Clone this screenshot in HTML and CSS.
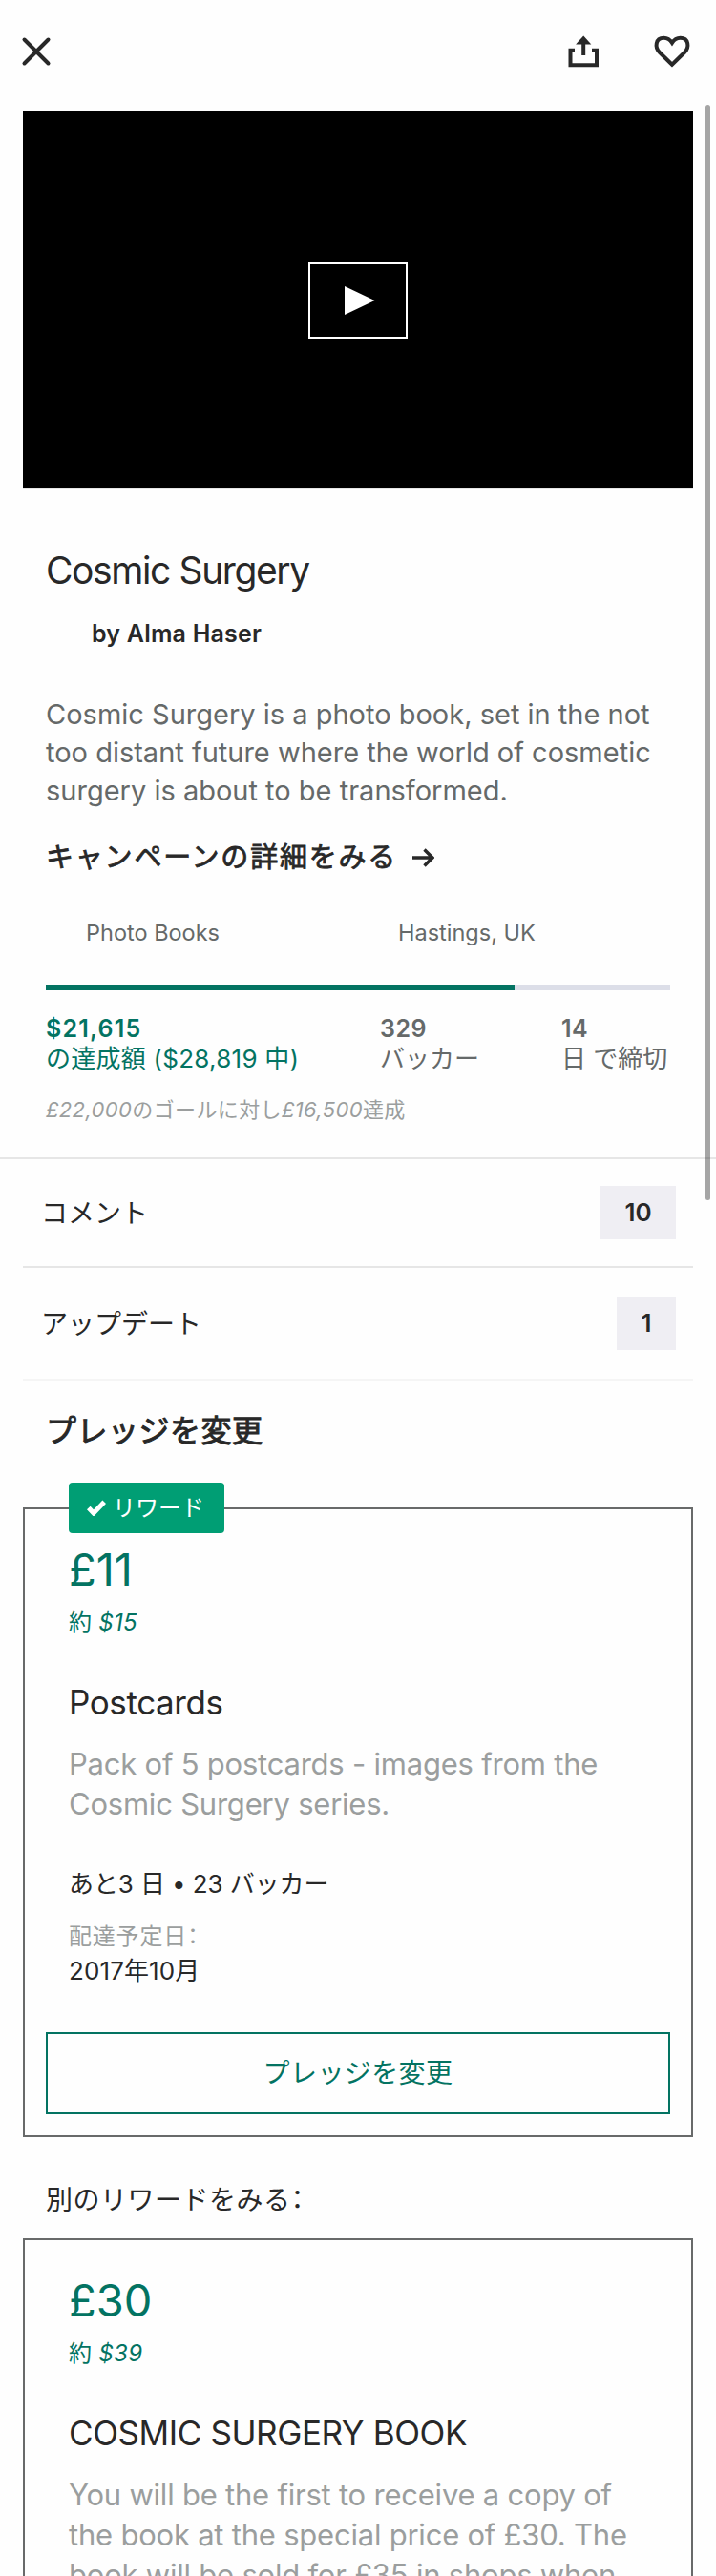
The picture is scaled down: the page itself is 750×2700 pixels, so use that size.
FILE: index.html
```html
<!DOCTYPE html>
<html lang="ja">
<head>
<meta charset="utf-8">
<title>Cosmic Surgery</title>
<link rel="stylesheet" href="styles.css">
</head>
<body>
<div class="page">
  <header class="toolbar">
    <svg class="icon-close" width="34" height="34" viewBox="0 0 34 34"><path d="M4.500 4.500 29.500 29.500M29.500 4.500 4.500 29.500"/></svg>
    <div class="actions">
      <svg class="icon-share" width="34" height="36" viewBox="0 0 34 36"><path class="line" d="M8 16.800H3.500V32.300h27.500V16.800h-5"/><path class="line" d="M17.200 8v14"/><path class="solid" d="M17.200 1.500 25.300 10.500H9.100z"/></svg>
      <svg class="icon-heart" width="40" height="36" viewBox="0 0 40 36"><path d="M20 31.800 7 19C1.500 13.500 2.500 3.800 11.300 3.800 15.500 3.800 18 5.800 20 8.900 22 5.800 24.500 3.800 28.700 3.800 37.500 3.800 38.500 13.500 33 19z"/></svg>
    </div>
  </header>

  <div class="video">
    <div class="play"><svg width="32" height="30" viewBox="0 0 32 30"><path d="M0 0 31.500 15 0 30z"/></svg></div>
  </div>

  <main>
    <section class="summary">
      <h1 class="project-title">Cosmic Surgery</h1>
      <p class="creator">by Alma Haser</p>
      <p class="blurb">Cosmic Surgery is a photo book, set in the not<br>too distant future where the world of cosmetic<br>surgery is about to be transformed.</p>
      <a class="campaign-link">キャンペーンの詳細をみる<svg width="24" height="24" viewBox="0 0 24 24"><path d="M1 12H21.500M13.500 3.500 22 12 13.500 20.500"/></svg></a>
      <div class="facts"><span class="category">Photo Books</span><span class="place">Hastings, UK</span></div>
      <div class="progress"><div class="progress-fill"></div></div>
      <div class="stats">
        <div class="stat pledged"><b>$21,615</b><span>の達成額 ($28,819 中)</span></div>
        <div class="stat backers"><b>329</b><span>バッカー</span></div>
        <div class="stat days"><b>14</b><span>日 で締切</span></div>
      </div>
      <p class="goal"><i>£22,000</i>のゴールに対し<i>£16,500</i>達成</p>
    </section>

    <section class="links">
      <div class="link-row comments"><span class="link-name">コメント</span><span class="count">10</span></div>
      <div class="link-row updates"><span class="link-name">アップデート</span><span class="count">1</span></div>
    </section>

    <h2 class="pledge-heading">プレッジを変更</h2>
    <article class="reward">
      <div class="tag"><svg width="20" height="17" viewBox="0 0 20 17"><path d="M1.800 8.500 7 14 18.200 2.200"/></svg>リワード</div>
      <div class="amount">£11</div>
      <div class="approx">約 <i>$15</i></div>
      <h3 class="reward-title">Postcards</h3>
      <p class="reward-text">Pack of 5 postcards - images from the<br>Cosmic Surgery series.</p>
      <p class="availability">あと3 日 • 23 バッカー</p>
      <p class="delivery-label">配達予定日<span class="colon">：</span></p>
      <p class="delivery-date">2017年10月</p>
      <button class="pledge-button">プレッジを変更</button>
    </article>

    <h2 class="other-heading">別のリワードをみる<span class="colon">：</span></h2>
    <article class="reward">
      <div class="amount">£30</div>
      <div class="approx">約 <i>$39</i></div>
      <h3 class="reward-title">COSMIC SURGERY BOOK</h3>
      <p class="reward-text">You will be the first to receive a copy of<br>the book at the special price of £30. The<br>book will be sold for £35 in shops when</p>
    </article>
  </main>
  <div class="scrollbar"></div>
</div>
</body>
</html>
```
FILE: styles.css
```css
* { box-sizing: border-box; margin: 0; padding: 0; }
body {
  background: #fefefe;
  color: #282828;
  font-family: Inter, "Noto Sans CJK JP", sans-serif;
  font-weight: 400;
}
.page { position: relative; width: 750px; height: 2700px; overflow: hidden; }
svg { display: block; flex: none; }
i { font-style: italic; }

.toolbar { display: flex; justify-content: space-between; height: 116px; padding: 36px 26px 0 21px; }
.icon-close { margin-top: 1px; }
.icon-close path { stroke: #282828; stroke-width: 4; stroke-linecap: round; }
.actions { display: flex; gap: 56px; }
.icon-share .line, .icon-heart path { fill: none; stroke: #282828; stroke-width: 4; }
.icon-share .solid { fill: #282828; }

.video {
  display: flex; align-items: center; justify-content: center;
  height: 397px; margin: 0 24px;
  background: #000; border-bottom: 2px solid #e6e6e6;
}
.play { display: flex; align-items: center; width: 104px; height: 80px; margin-top: 3px; padding-left: 35.500px; border: 2.500px solid #fff; }
.play path { fill: #fff; }

.summary { padding: 61px 48px 35px; border-bottom: 2px solid #e6e6e6; }
.project-title { font-size: 39px; line-height: 48px; font-weight: 400; letter-spacing: -1.400px; }
.creator { margin-top: 26px; padding-left: 48px; font-size: 25px; line-height: 32px; font-weight: 600; letter-spacing: .2px; }
.blurb { margin-top: 49px; font-size: 29px; line-height: 40px; color: #656969; white-space: nowrap; }
.campaign-link { display: flex; align-items: center; gap: 15px; margin-top: 30px; font-size: 29px; line-height: 40px; letter-spacing: 1.800px; -webkit-text-stroke: .8px #282828; }
.campaign-link path { fill: none; stroke: #282828; stroke-width: 3.400; }
.facts { display: flex; margin-top: 43px; padding-left: 42px; font-size: 23.500px; line-height: 32px; color: #656969; }
.category { width: 327px; }
.progress { height: 6px; margin-top: 38px; background: #dcdee8; }
.progress-fill { width: 75%; height: 6px; background: #037362; }
.stats { display: flex; margin-top: 24px; font-size: 26px; line-height: 32px; color: #656969; white-space: nowrap; }
.stat { display: flex; flex-direction: column; }
.stat b { font-size: 25px; font-weight: 600; letter-spacing: .5px; }
.pledged { width: 350px; color: #037362; letter-spacing: .250px; }
.pledged b { letter-spacing: 1.200px; }
.backers { width: 190px; }
.goal { margin-top: 22px; font-size: 22px; line-height: 30px; color: #9b9e9e; letter-spacing: .380px; }

.links { margin: 0 24px; }
.link-row { display: flex; align-items: center; justify-content: space-between; padding: 0 18px 0 19px; font-size: 28px; border-bottom: 2px solid #e6e6e6; }
.link-name { padding-bottom: 2px; }
.comments { height: 114px; }
.updates { height: 118px; border-color: #f5f5f5; }
.count { width: 79px; height: 56px; background: #efeef3; font-size: 26px; line-height: 56px; font-weight: 600; text-align: center; }
.updates .count { width: 62px; }

.colon { font-feature-settings: "halt"; }
.pledge-heading { margin: 29px 48px 56px; font-size: 32px; line-height: 48px; font-weight: 400; letter-spacing: .5px; -webkit-text-stroke: 1px #282828; }
.reward { position: relative; margin: 0 24px; padding: 33px 22px 22px; border: 2px solid #686a6a; background: #fefefe; white-space: nowrap; }
.reward > :not(.pledge-button):not(.tag) { padding-left: 24px; }
.tag {
  position: absolute; top: -28px; left: 46px;
  display: flex; align-items: center; gap: 7px;
  width: 163px; height: 53px; padding-left: 19px;
  border-radius: 4px; background: #009e74; color: #fff; font-size: 24px; line-height: 53px;
}
.tag path { fill: none; stroke: #fff; stroke-width: 5; }
.amount { font-size: 47px; line-height: 60px; color: #037362; }
.approx { margin-top: 10px; font-size: 24px; line-height: 32px; color: #037362; letter-spacing: .3px; }
.reward-title { margin-top: 45px; font-size: 35px; line-height: 44px; font-weight: 400; letter-spacing: -.4px; }
.reward-text { margin-top: 22px; font-size: 31px; line-height: 42px; color: #9b9e9e; letter-spacing: -.220px; }
.availability { margin-top: 47px; font-size: 26px; line-height: 32px; letter-spacing: -.1px; }
.delivery-label { margin-top: 24px; font-size: 24px; line-height: 30px; color: #9b9e9e; letter-spacing: .8px; }
.delivery-date { margin-top: 5px; font-size: 26px; line-height: 32px; letter-spacing: .1px; }
.pledge-button {
  display: block; width: 100%; height: 86px; margin-top: 48px;
  border: 2px solid #037362; background: #fefefe; color: #037362;
  font: 400 28px/40px Inter, "Noto Sans CJK JP", sans-serif; letter-spacing: .4px;
}
.other-heading { margin: 46px 48px 20px; font-size: 28px; line-height: 40px; font-weight: 400; letter-spacing: .5px; }

.scrollbar { position: absolute; top: 110px; left: 739px; width: 5px; height: 1148px; border-radius: 3px; background: rgba(0, 0, 0, .35); }
```
